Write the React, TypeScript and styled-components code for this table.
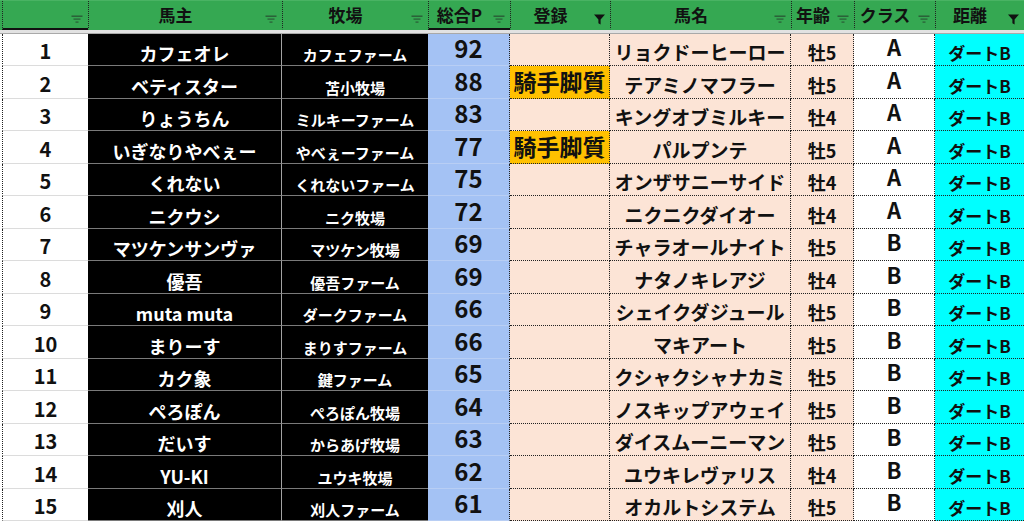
import React from "react";
import styled, { createGlobalStyle } from "styled-components";

const GlobalStyle = createGlobalStyle`
  html, body {
    margin: 0;
    padding: 0;
    background: #fff;
  }
`;

const COLS = "86px 194px 146px 82px 100px 181px 63px 81px 89px";
const DOT = "1px dotted #222";

const Sheet = styled.div`
  width: 1024px;
  height: 521px;
  overflow: hidden;
  display: flex;
  flex-direction: column;
  font-family: "Noto Sans CJK JP", "Noto Sans", sans-serif;
  font-weight: 700;
`;

const HeaderRow = styled.div`
  display: grid;
  grid-template-columns: ${COLS};
  height: 30px;
  padding-left: 2px;
  background: #35a852;
  box-sizing: border-box;
  border-top: 1px solid #49b363;
`;

const HeaderCell = styled.div<{ $thick?: boolean }>`
  position: relative;
  display: flex;
  align-items: center;
  justify-content: center;
  padding: 0 20px 0 0;
  border-left: ${DOT};
  border-bottom: 2px solid ${(p) => (p.$thick ? "#111" : "transparent")};
  font-size: 17px;
  line-height: 1;
  color: #111;
  box-sizing: border-box;
`;

const FilterBtn = styled.svg`
  position: absolute;
  right: 5px;
  top: 13px;
`;

const Band = styled.div`
  height: 4px;
  background: #e2e2e2;
  border-bottom: 1px solid #a9a9a9;
  box-sizing: border-box;
`;

const Body = styled.div`
  display: grid;
  grid-template-columns: ${COLS};
  grid-template-rows: repeat(15, 1fr);
  height: 487px;
  padding-left: 2px;
  background: #fff;
`;

type ColStyle = {
  bg: string;
  color: string;
  size: number;
  pb: number;
  line: string;
  left?: string;
  right?: string;
};

const Cell = styled.div<{ $c: ColStyle; $bg?: string }>`
  display: flex;
  align-items: flex-end;
  justify-content: center;
  white-space: nowrap;
  box-sizing: border-box;
  min-height: 0;
  background: ${(p) => p.$bg || p.$c.bg};
  color: ${(p) => p.$c.color};
  font-size: ${(p) => p.$c.size}px;
  line-height: 1;
  padding-bottom: ${(p) => p.$c.pb}px;
  border-bottom: ${(p) => p.$c.line};
  border-left: ${(p) => p.$c.left || "none"};
  border-right: ${(p) => p.$c.right || "none"};
`;

const PEACH = "#fce4d6";

const colStyles: ColStyle[] = [
  { bg: "#fff", color: "#111", size: 20, pb: 4, line: "1px solid #dcdcdc", left: DOT },
  { bg: "#000", color: "#fff", size: 18, pb: 3, line: "1px solid #7a7a7a", right: "1px solid #a3a3a3" },
  { bg: "#000", color: "#fff", size: 15, pb: 3, line: "1px solid #7a7a7a" },
  { bg: "#a4c2f4", color: "#111", size: 24, pb: 5, line: "1px solid #b8cef4", right: DOT },
  { bg: PEACH, color: "#111", size: 23, pb: 5, line: DOT, right: DOT },
  { bg: PEACH, color: "#111", size: 19, pb: 4, line: DOT, right: DOT },
  { bg: PEACH, color: "#111", size: 18, pb: 4, line: DOT, right: DOT },
  { bg: "#fff", color: "#111", size: 22, pb: 8, line: DOT, right: DOT },
  { bg: "#00ffff", color: "#111", size: 17, pb: 4, line: DOT },
];

const headers = [
  { label: "", filtered: false, thick: true },
  { label: "馬主", filtered: false },
  { label: "牧場", filtered: false },
  { label: "総合P", filtered: false, thick: true },
  { label: "登録", filtered: true },
  { label: "馬名", filtered: false },
  { label: "年齢", filtered: false },
  { label: "クラス", filtered: false },
  { label: "距離", filtered: true },
];

const rows: string[][] = [
  ["1", "カフェオレ", "カフェファーム", "92", "", "リョクドーヒーロー", "牡5", "A", "ダートB"],
  ["2", "ベティスター", "苫小牧場", "88", "騎手脚質", "テアミノマフラー", "牡5", "A", "ダートB"],
  ["3", "りょうちん", "ミルキーファーム", "83", "", "キングオブミルキー", "牡4", "A", "ダートB"],
  ["4", "いぎなりやべぇー", "やべぇーファーム", "77", "騎手脚質", "パルプンテ", "牡5", "A", "ダートB"],
  ["5", "くれない", "くれないファーム", "75", "", "オンザサニーサイド", "牡4", "A", "ダートB"],
  ["6", "ニクウシ", "ニク牧場", "72", "", "ニクニクダイオー", "牡4", "A", "ダートB"],
  ["7", "マツケンサンヴァ", "マツケン牧場", "69", "", "チャラオールナイト", "牡5", "B", "ダートB"],
  ["8", "優吾", "優吾ファーム", "69", "", "ナタノキレアジ", "牡4", "B", "ダートB"],
  ["9", "muta muta", "ダークファーム", "66", "", "シェイクダジュール", "牡5", "B", "ダートB"],
  ["10", "まりーす", "まりすファーム", "66", "", "マキアート", "牡5", "B", "ダートB"],
  ["11", "カク象", "鍵ファーム", "65", "", "クシャクシャナカミ", "牡5", "B", "ダートB"],
  ["12", "ぺろぽん", "ぺろぽん牧場", "64", "", "ノスキップアウェイ", "牡5", "B", "ダートB"],
  ["13", "だいす", "からあげ牧場", "63", "", "ダイスムーニーマン", "牡5", "B", "ダートB"],
  ["14", "YU-KI", "ユウキ牧場", "62", "", "ユウキレヴァリス", "牡4", "B", "ダートB"],
  ["15", "刈人", "刈人ファーム", "61", "", "オカルトシステム", "牡5", "B", "ダートB"],
];

function FilterIcon({ filtered }: { filtered: boolean }) {
  if (filtered) {
    return (
      <FilterBtn width="11" height="11" viewBox="0 0 11 11">
        <path d="M0 0.5h11L6.6 5.4V10.5L4.4 9.2V5.4Z" fill="#111" />
      </FilterBtn>
    );
  }
  return (
    <FilterBtn width="12" height="10" viewBox="0 0 12 10">
      <rect x="0.5" y="1.5" width="11" height="1.4" fill="#26422e" opacity="0.75" />
      <rect x="2.5" y="4.5" width="7" height="1.2" fill="#26422e" opacity="0.75" />
      <rect x="4.5" y="7.5" width="3" height="1.2" fill="#26422e" opacity="0.75" />
    </FilterBtn>
  );
}

export default function App() {
  return (
    <>
      <GlobalStyle />
      <Sheet>
        <HeaderRow>
          {headers.map((h, i) => (
            <HeaderCell key={i} $thick={h.thick}>
              {h.label}
              <FilterIcon filtered={h.filtered} />
            </HeaderCell>
          ))}
        </HeaderRow>
        <Band />
        <Body>
          {rows.map((r, ri) =>
            r.map((v, ci) => (
              <Cell
                key={`${ri}-${ci}`}
                $c={colStyles[ci]}
                $bg={ci === 4 && v ? "#ffc000" : undefined}
              >
                {v}
              </Cell>
            ))
          )}
        </Body>
      </Sheet>
    </>
  );
}
